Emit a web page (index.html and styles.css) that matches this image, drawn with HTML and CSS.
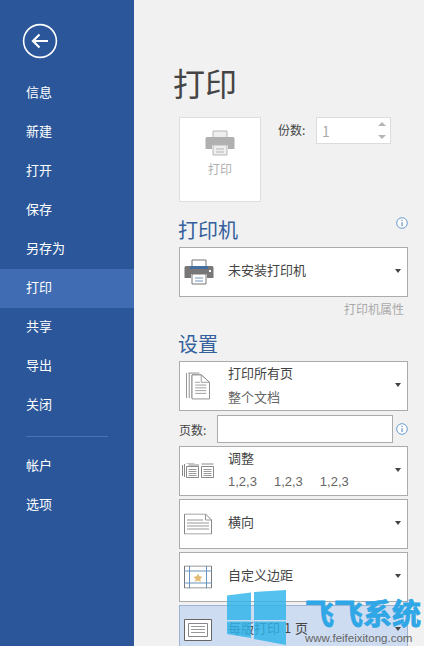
FILE: index.html
```html
<!DOCTYPE html>
<html lang="zh-CN">
<head>
    <meta charset="UTF-8">
    <meta name="viewport" content="width=device-width, initial-scale=1.0">
    <title>打印</title>
    <link rel="stylesheet" href="styles.css">
</head>
<body>
    <div class="app">
        <nav class="sidebar">
            <div class="back">
                <svg width="36" height="36" viewBox="0 0 36 36">
                    <circle cx="18" cy="18" r="16.4" fill="none" stroke="#fff" stroke-width="1.6"/>
                    <path d="M26 18H11M17.5 11.5L11 18l6.500 6.500" fill="none" stroke="#fff" stroke-width="2.200"/>
                </svg>
            </div>
            <a class="nav-item">信息</a>
            <a class="nav-item">新建</a>
            <a class="nav-item">打开</a>
            <a class="nav-item">保存</a>
            <a class="nav-item">另存为</a>
            <a class="nav-item active">打印</a>
            <a class="nav-item">共享</a>
            <a class="nav-item">导出</a>
            <a class="nav-item">关闭</a>
            <div class="nav-line"></div>
            <a class="nav-item">帐户</a>
            <a class="nav-item">选项</a>
        </nav>

        <main class="main">
            <h1 class="title">打印</h1>

            <div class="print-row">
                <div class="print-btn">
                    <svg width="30" height="26" viewBox="0 0 30 26">
                        <path d="M8 1h14v7H8z" fill="#eee" stroke="#b5b5b5"/>
                        <path d="M2 7h26a1.500 1.500 0 0 1 1.500 1.500V19H23v-4H7v4H.5V8.500A1.500 1.500 0 0 1 2 7z" fill="#b0b0b0"/>
                        <path d="M8 15h14v10H8z" fill="#eee" stroke="#b5b5b5"/>
                        <path d="M11 19h8M11 22h8" stroke="#b5b5b5"/>
                    </svg>
                    <span>打印</span>
                </div>
                <span class="copies-label">份数:</span>
                <div class="spinner">
                    <span>1</span>
                    <div class="arrows">
                        <i class="arrow-up"></i>
                        <i class="arrow-down"></i>
                    </div>
                </div>
            </div>

            <div class="head-row printer-head">
                <h2 class="heading">打印机</h2>
                <svg class="info" width="12" height="12" viewBox="0 0 12 12">
                    <circle cx="6" cy="6" r="5.300" fill="#fff" stroke="#6b9bd0"/>
                    <path d="M6 2.800v1.200M6 5.200v3.800" stroke="#4a7cb5"/>
                </svg>
            </div>
            <div class="dropdown">
                <svg class="icon" width="30" height="26" viewBox="0 0 30 26">
                    <path d="M8 1h14v7H8z" fill="#fff" stroke="#777"/>
                    <path d="M2 7h26a1.500 1.500 0 0 1 1.500 1.500V19H23v-4H7v4H.5V8.500A1.500 1.500 0 0 1 2 7z" fill="#777"/>
                    <path d="M6 7h18v3H6z" fill="#44709f"/>
                    <path d="M8 15h14v10H8z" fill="#fff" stroke="#777"/>
                    <path d="M11 19h8M11 22h8" stroke="#6a93bd"/>
                    <path d="M25 11h2v2h-2z" fill="#fff"/>
                </svg>
                <span class="label">未安装打印机</span>
                <i class="caret"></i>
            </div>
            <div class="printer-props">打印机属性</div>

            <h2 class="heading settings-head">设置</h2>
            <div class="dropdown">
                <svg class="icon pages-icon" width="24" height="28" viewBox="0 0 26 30">
                    <path d="M.5 1v27M2.500 1h12M3.500 1v27M6.500 3h10l9 8v17H6.500z" fill="none" stroke="#888"/>
                    <path d="M6.500 3h10l9 8v18H6.500z" fill="#fff" stroke="#888"/>
                    <path d="M16.500 3v8h9M10 11h5M10 14h12M10 17h12M10 20h12M10 23h12" fill="none" stroke="#999"/>
                </svg>
                <div class="two-line">
                    <span class="label">打印所有页</span>
                    <span class="sub">整个文档</span>
                </div>
                <i class="caret"></i>
            </div>

            <div class="pages-row">
                <span class="pages-label">页数:</span>
                <div class="pages-input"></div>
                <svg class="info" width="12" height="12" viewBox="0 0 12 12">
                    <circle cx="6" cy="6" r="5.300" fill="#fff" stroke="#6b9bd0"/>
                    <path d="M6 2.800v1.200M6 5.200v3.800" stroke="#4a7cb5"/>
                </svg>
            </div>

            <div class="dropdown">
                <svg class="icon collate-icon" width="33" height="16" viewBox="0 0 33 16">
                    <path d="M.5 2v11M2.500 1v13M4.500 0h8M6.500 2h10.500M19.500 1h12" fill="none" stroke="#888"/>
                    <path d="M4.500 3.500h12v11h-12zM19.500 3.500h12v11h-12z" fill="#fff" stroke="#888"/>
                    <path d="M6.500 6.500h8M6.500 8.500h8M6.500 10.500h8M6.500 12.500h8M21.500 6.500h8M21.500 8.500h8M21.500 10.500h8M21.500 12.500h8" stroke="#999"/>
                </svg>
                <div class="two-line">
                    <span class="label">调整</span>
                    <span class="sub collate-nums"><span>1,2,3</span><span>1,2,3</span><span>1,2,3</span></span>
                </div>
                <i class="caret"></i>
            </div>

            <div class="dropdown">
                <svg class="icon" width="28" height="21" viewBox="0 0 28 21">
                    <path d="M.5.500h21l6 6v14H.5z" fill="#fff" stroke="#888"/>
                    <path d="M21.500.500v6h6M3 6.500h16M3 9.500h22M3 12.500h22M3 15.500h22" fill="none" stroke="#999"/>
                </svg>
                <span class="label">横向</span>
                <i class="caret"></i>
            </div>

            <div class="dropdown">
                <svg class="icon" width="28" height="23" viewBox="0 0 28 23">
                    <path d="M.5.500h27v22H.5z" fill="#fff" stroke="#777"/>
                    <path d="M5.500 0v23M22.500 0v23M0 5.500h28M0 17.500h28" stroke="#6a93bd"/>
                    <path d="M14 8l1.400 2.800 3.100.4-2.200 2.200.5 3-2.800-1.500-2.800 1.500.5-3-2.200-2.200 3.100-.4z" fill="#e3bb72"/>
                </svg>
                <span class="label">自定义边距</span>
                <i class="caret"></i>
            </div>

            <div class="dropdown selected">
                <svg class="icon" width="28" height="22" viewBox="0 0 28 22">
                    <path d="M.5.500h27v21H.5z" fill="#fff" stroke="#666"/>
                    <path d="M4.500 4.500h19v13h-19z" fill="#fff" stroke="#888"/>
                    <path d="M7 7.500h14M7 10.500h14M7 13.500h14" stroke="#999"/>
                </svg>
                <span class="label wide">每版打印 1 页</span>
                <i class="caret"></i>
            </div>
        </main>

        <!-- watermark sits over the last rows -->
        <div class="watermark">
            <svg class="wm-logo" width="60" height="55" viewBox="0 0 60 55">
                <path d="M0 5.500l24-3V30H0zM27 2L59 0v30H27zM0 31.500h24V48L0 44zM27 31.500h32V55l-32-6z" fill="#2fb4ec"/>
            </svg>
            <div class="wm-text">
                <span class="wm-name">飞飞系统</span>
                <span class="wm-url">www.feifeixitong.com</span>
            </div>
        </div>
    </div>
</body>
</html>
```

FILE: styles.css
```css
* {
    box-sizing: border-box;
}

html, body {
    margin: 0;
    padding: 0;
    height: 100%;
    overflow: hidden;
}

body {
    font-family: "Noto Sans CJK SC", "Liberation Sans", sans-serif;
    font-size: 13px;
    color: #444;
    background-color: #f1f1f1;
}

.app {
    position: relative;
    display: flex;
    width: 424px;
    height: 646px;
    overflow: hidden;
}

/* left column */
.sidebar {
    flex: 0 0 134px;
    background-color: #2b579a;
    color: #fff;
}

.back {
    height: 74px;
    padding: 23px 0 0 22px;
}

.nav-item {
    display: flex;
    align-items: center;
    height: 39px;
    padding: 0 0 5px 26px;
    line-height: 1;
}

.nav-item.active {
    background-color: #3f6cb3;
}

.nav-line {
    height: 1px;
    margin: 11px 26px 10px 26px;
    background-color: #4a72ae;
}

/* right column */
.main {
    flex: 1;
    min-width: 0;
    padding: 0 16px 0 45px;
}

.title {
    margin: 62px 0 0 -6px;
    font-size: 32px;
    font-weight: 400;
    line-height: 40px;
    color: #444;
}

.print-row {
    display: flex;
    align-items: flex-start;
    margin-top: 15px;
}

.print-btn {
    display: flex;
    flex-direction: column;
    align-items: center;
    flex: 0 0 82px;
    height: 85px;
    padding-top: 12px;
    background-color: #fff;
    border: 1px solid #dedede;
    color: #b0b0b0;
    font-size: 12px;
    line-height: 16px;
}

.print-btn span {
    margin-top: 5px;
}

.copies-label {
    margin: 4px 0 0 17px;
    width: 38px;
    font-size: 12px;
    line-height: 18px;
}

.spinner {
    display: flex;
    align-items: center;
    justify-content: space-between;
    width: 75px;
    height: 27px;
    padding: 0 4px 0 5px;
    background-color: #fff;
    border: 1px solid #dcdcdc;
    color: #aaa;
    font-size: 14px;
}

.arrows {
    display: flex;
    flex-direction: column;
    gap: 9px;
}

.arrow-up, .arrow-down {
    display: block;
    width: 0;
    height: 0;
    border-left: 4px solid transparent;
    border-right: 4px solid transparent;
}

.arrow-up {
    border-bottom: 4px solid #b5b5b5;
}

.arrow-down {
    border-top: 4px solid #b5b5b5;
}

.head-row {
    display: flex;
    justify-content: space-between;
    align-items: flex-start;
}

.printer-head {
    margin-top: 13px;
    height: 32px;
}

.printer-head .info {
    margin-top: 2px;
}

.heading {
    margin: 0 0 0 -1px;
    font-size: 20px;
    font-weight: 400;
    line-height: 30px;
    color: #34609c;
}

.settings-head {
    margin-top: 11px;
    margin-bottom: 2px;
}

.dropdown {
    position: relative;
    display: flex;
    align-items: center;
    width: 229px;
    height: 50px;
    padding-bottom: 5px;
    margin-bottom: 3px;
    background-color: #fff;
    border: 1px solid #ababab;
}

.dropdown .icon {
    position: absolute;
    left: 4px;
    top: 50%;
    transform: translateY(-50%);
}

.dropdown .pages-icon {
    left: 6px;
}

.dropdown .collate-icon {
    left: 2px;
}

.dropdown .label, .two-line {
    margin-left: 48px;
}

.label {
    line-height: 18px;
    color: #444;
}

.label.wide {
    word-spacing: 1px;
}

.two-line {
    display: flex;
    flex-direction: column;
    gap: 6px;
    padding-top: 3px;
}

.two-line .label {
    margin-left: 0;
}

.sub {
    line-height: 18px;
    color: #666;
}

.collate-nums {
    display: flex;
    gap: 17px;
    font-family: "Liberation Sans", sans-serif;
}

.caret {
    position: absolute;
    right: 6px;
    top: 21px;
    width: 0;
    height: 0;
    border-left: 3.500px solid transparent;
    border-right: 3.500px solid transparent;
    border-top: 4px solid #444;
}

.printer-props {
    width: 225px;
    margin-top: 0;
    margin-bottom: 0;
    text-align: right;
    font-size: 12px;
    line-height: 18px;
    color: #aaa;
}

.pages-row {
    display: flex;
    align-items: center;
    height: 28px;
    margin-top: 4px;
    margin-bottom: 3px;
}

.pages-label {
    flex: none;
    width: 38px;
    font-size: 12px;
}

.pages-input {
    flex: none;
    width: 176px;
    height: 28px;
    background-color: #fff;
    border: 1px solid #ababab;
}

.pages-row .info {
    flex: none;
    margin-left: 3px;
}

.dropdown.selected {
    background-color: #cddcf0;
    border-color: #9db4d2;
}

/* watermark */
.watermark {
    position: absolute;
    left: 227px;
    top: 590px;
    display: flex;
    gap: 18px;
}

.wm-logo {
    flex: none;
    opacity: 0.82;
}

.wm-text {
    display: flex;
    flex-direction: column;
    margin-top: 7px;
}

.wm-name {
    width: 120px;
    font-size: 29px;
    font-weight: 700;
    line-height: 31px;
    white-space: nowrap;
    color: #2fa6e6;
    -webkit-text-stroke: 0.8px #2fa6e6;
}

.wm-url {
    margin-top: 3px;
    font-family: "Liberation Sans", sans-serif;
    font-size: 11.500px;
    line-height: 14px;
    white-space: nowrap;
    color: #666;
}
```
